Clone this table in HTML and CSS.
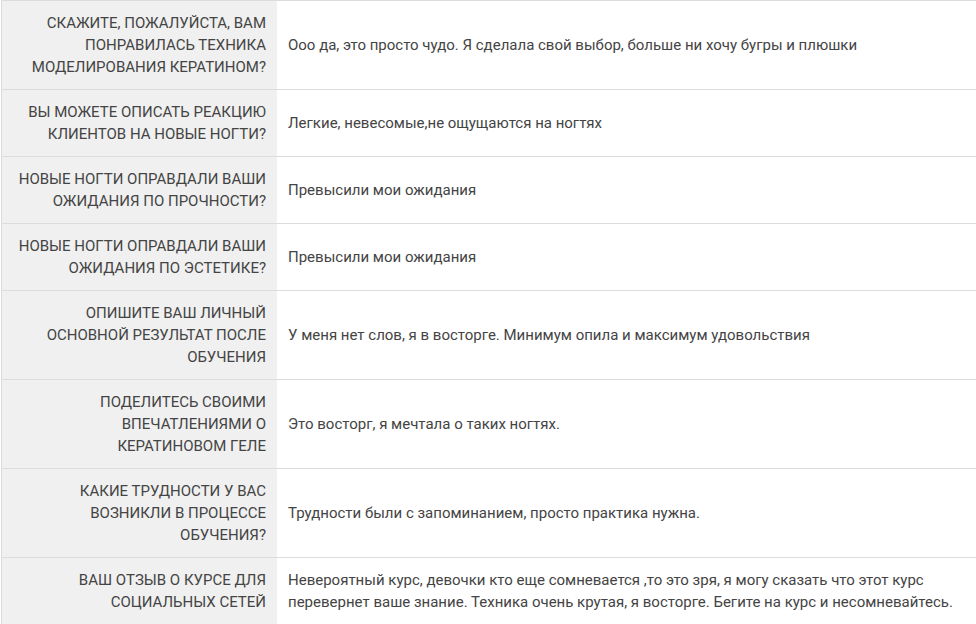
FILE: index.html
```html
<!DOCTYPE html>
<html lang="ru">
<head>
<meta charset="utf-8">
<title>Отзыв</title>
<link rel="stylesheet" href="styles.css">
</head>
<body>
<table class="review">
  <tr>
    <th class="q">СКАЖИТЕ, ПОЖАЛУЙСТА, ВАМ ПОНРАВИЛАСЬ ТЕХНИКА МОДЕЛИРОВАНИЯ КЕРАТИНОМ?</th>
    <td class="a">Ооо да, это просто чудо. Я сделала свой выбор, больше ни хочу бугры и плюшки</td>
  </tr>
  <tr>
    <th class="q">ВЫ МОЖЕТЕ ОПИСАТЬ РЕАКЦИЮ КЛИЕНТОВ НА НОВЫЕ НОГТИ?</th>
    <td class="a">Легкие, невесомые,не ощущаются на ногтях</td>
  </tr>
  <tr>
    <th class="q">НОВЫЕ НОГТИ ОПРАВДАЛИ ВАШИ ОЖИДАНИЯ ПО ПРОЧНОСТИ?</th>
    <td class="a">Превысили мои ожидания</td>
  </tr>
  <tr>
    <th class="q">НОВЫЕ НОГТИ ОПРАВДАЛИ ВАШИ ОЖИДАНИЯ ПО ЭСТЕТИКЕ?</th>
    <td class="a">Превысили мои ожидания</td>
  </tr>
  <tr>
    <th class="q">ОПИШИТЕ ВАШ ЛИЧНЫЙ ОСНОВНОЙ РЕЗУЛЬТАТ ПОСЛЕ ОБУЧЕНИЯ</th>
    <td class="a">У меня нет слов, я в восторге. Минимум опила и максимум удовольствия</td>
  </tr>
  <tr>
    <th class="q">ПОДЕЛИТЕСЬ СВОИМИ ВПЕЧАТЛЕНИЯМИ О КЕРАТИНОВОМ ГЕЛЕ</th>
    <td class="a">Это восторг, я мечтала о таких ногтях.</td>
  </tr>
  <tr>
    <th class="q">КАКИЕ ТРУДНОСТИ У ВАС ВОЗНИКЛИ В ПРОЦЕССЕ ОБУЧЕНИЯ?</th>
    <td class="a">Трудности были с запоминанием, просто практика нужна.</td>
  </tr>
  <tr>
    <th class="q">ВАШ ОТЗЫВ О КУРСЕ ДЛЯ СОЦИАЛЬНЫХ СЕТЕЙ</th>
    <td class="a">Невероятный курс, девочки кто еще сомневается ,то это зря, я могу сказать что этот курс перевернет ваше знание. Техника очень крутая, я восторге. Бегите на курс и несомневайтесь.</td>
  </tr>
</table>
</body>
</html>
```

FILE: styles.css
```css
html, body {
  margin: 0;
  padding: 0;
  background: #ffffff;
}

body {
  font-family: Roboto, "Liberation Sans", sans-serif;
  font-size: 15px;
  line-height: 22px;
  color: #333333;
}

.review {
  border-collapse: collapse;
  margin-left: 1px;
  width: 975px;
  border-left: 1px solid #dcdcdc;
}

.review th,
.review td {
  border-top: 1px solid #dcdcdc;
  padding: 11px 11px 11px 12px;
  vertical-align: middle;
}

.q {
  width: 252px;
  background: #f0f0f0;
  text-align: right;
  font-weight: normal;
  color: #444444;
}

.review .a {
  padding-left: 11px;
  text-align: left;
  color: #444444;
}
```
